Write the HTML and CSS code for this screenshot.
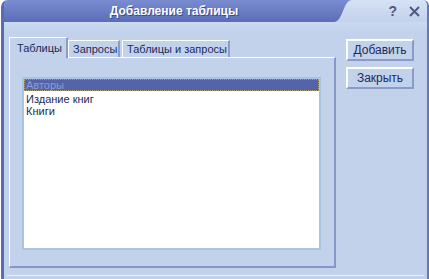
FILE: index.html
```html
<!DOCTYPE html>
<html lang="ru">
<head>
    <meta charset="UTF-8">
    <title>Добавление таблицы</title>
    <link rel="stylesheet" href="styles.css">
</head>
<body>
    <div class="window">
        <div class="titlebar">
            <div class="title-main"><span class="title-text">Добавление таблицы</span></div>
            <div class="title-side">
                <svg class="title-curve" width="18" height="22" viewBox="0 0 18 22">
                    <defs>
                        <linearGradient id="tg" x1="0" y1="0" x2="0" y2="1">
                            <stop offset="0" stop-color="#7a8cd0"/>
                            <stop offset="1" stop-color="#5b6db6"/>
                        </linearGradient>
                    </defs>
                    <path d="M0 0 H18 C9 0 9 22 0 22 Z" fill="url(#tg)"/>
                </svg>
                <div class="title-buttons">
                    <span class="help">?</span>
                    <svg class="close" width="11" height="11" viewBox="0 0 11 11">
                        <path d="M1 1 L10 10 M10 1 L1 10" stroke="#4e5882" stroke-width="2" fill="none"/>
                    </svg>
                </div>
            </div>
        </div>
        <div class="client">
            <div class="tabs-area">
                <div class="tab-strip">
                    <div class="tab tab-active">Таблицы</div>
                    <div class="tab tab-mid">Запросы</div>
                    <div class="tab tab-wide">Таблицы и запросы</div>
                </div>
                <div class="panel">
                    <div class="listbox">
                        <div class="item item-selected">Авторы</div>
                        <div class="item">Издание книг</div>
                        <div class="item">Книги</div>
                    </div>
                </div>
            </div>
            <div class="buttons">
                <button class="btn">Добавить</button>
                <button class="btn">Закрыть</button>
            </div>
        </div>
        <div class="bottom-line"></div>
    </div>
</body>
</html>
```
FILE: styles.css
```css
body {
    margin: 0;
    background-color: #ffffff;
    font-family: 'Liberation Sans', Arial, sans-serif;
    font-size: 11px;
    color: #1d2a5e;
}
.window {
    margin-left: 1px;
    width: 428px;
    height: 279px;
    box-sizing: border-box;
    background-color: #c1d2ea;
    border-left: 3px solid #5a6bb3;
    border-right: 2px solid #6677bb;
    border-top-left-radius: 7px;
    border-top-right-radius: 6px;
    display: flex;
    flex-direction: column;
    overflow: hidden;
}
.titlebar {
    height: 22px;
    display: flex;
    flex: none;
}
.title-main {
    width: 330px;
    box-sizing: border-box;
    background: linear-gradient(#7a8cd0, #5b6db6);
    display: flex;
    align-items: center;
    justify-content: center;
    padding-left: 10px;
}
.title-text {
    color: #ffffff;
    font-weight: bold;
    font-size: 12px;
    text-shadow: 1px 1px 0 #3c4a8c;
}
.title-side {
    flex: 1;
    display: flex;
    background: linear-gradient(#d6e2f5, #c2d2ec);
}
.title-curve {
    display: block;
    flex: none;
}
.title-buttons {
    flex: 1;
    display: flex;
    align-items: center;
    justify-content: flex-end;
    gap: 12px;
    padding-right: 7px;
}
.help {
    font-weight: bold;
    font-size: 14px;
    color: #4e5882;
    line-height: 14px;
}
.close {
    display: block;
}
.client {
    flex: 1;
    display: flex;
    padding: 15px 0 0 5px;
    background: linear-gradient(#cbdaf0, #c1d2ea 10px);
}
.tabs-area {
    width: 327px;
}
.tab-strip {
    height: 20px;
    display: flex;
    align-items: flex-end;
}
.tab {
    height: 17px;
    box-sizing: border-box;
    border-top: 1px solid #ffffff;
    border-left: 1px solid #ffffff;
    border-right: 2px solid #8c9bcc;
    padding: 2px 0 0 4px;
    white-space: nowrap;
    overflow: hidden;
    background-color: #c1d2ea;
}
.tab-active {
    height: 21px;
    width: 59px;
    padding: 4px 0 0 7px;
    margin-bottom: -1px;
    position: relative;
    z-index: 1;
}
.tab-mid {
    width: 52px;
}
.tab-wide {
    width: 108px;
    margin-left: 2px;
}
.panel {
    height: 211px;
    box-sizing: border-box;
    border-top: 1px solid #ffffff;
    border-left: 1px solid #ffffff;
    border-right: 2px solid #8796c8;
    border-bottom: 2px solid #8796c8;
    padding: 19px 0 0 12px;
}
.listbox {
    width: 299px;
    height: 173px;
    box-sizing: border-box;
    border: 2px solid #a9c3e2;
    background-color: #ffffff;
}
.item {
    height: 12px;
    line-height: 12px;
    padding-left: 2px;
}
.item-selected {
    height: 10px;
    line-height: 10px;
    background-color: #5563a8;
    color: #8d9bd6;
    border: 1px dotted #a8a070;
    margin-bottom: 2px;
    padding-left: 1px;
}
.buttons {
    display: flex;
    flex-direction: column;
    gap: 6px;
    margin-left: 10px;
    padding-top: 2px;
}
.btn {
    width: 68px;
    height: 22px;
    font-family: 'Liberation Sans', Arial, sans-serif;
    font-size: 12px;
    color: #1d2a5e;
    background-color: #c1d2ea;
    border-top: 2px solid #ffffff;
    border-left: 2px solid #ffffff;
    border-right: 2px solid #8b9acb;
    border-bottom: 2px solid #8b9acb;
    padding: 0;
}
.bottom-line {
    height: 3px;
    flex: none;
    border-top: 1px solid #eef3fb;
    margin: 0 3px 0 3px;
}
```
